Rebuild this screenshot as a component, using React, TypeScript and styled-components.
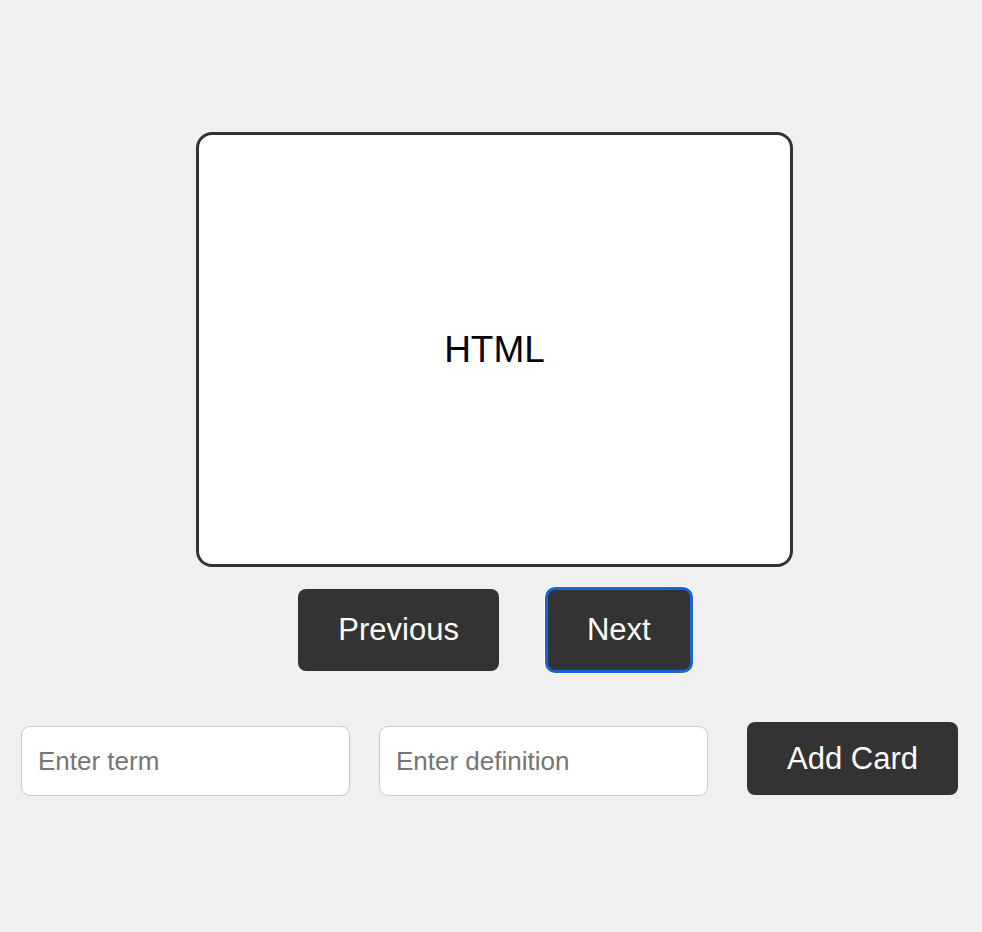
import React from "react";
import styled, { createGlobalStyle } from "styled-components";

const GlobalStyle = createGlobalStyle`
  html, body {
    margin: 0;
    padding: 0;
    background: #f0f0f0;
    font-family: "Liberation Sans", Arial, Helvetica, sans-serif;
  }
  * { box-sizing: border-box; }
`;

const Page = styled.div`
  width: 982px;
  min-height: 932px;
  display: flex;
  flex-direction: column;
`;

const Stage = styled.section`
  display: flex;
  flex-direction: column;
  align-items: center;
  padding: 132px 0 0 7px;
`;

const Card = styled.div`
  width: 597px;
  height: 435px;
  background: #ffffff;
  border: 3px solid #333333;
  border-radius: 16px;
  display: flex;
  align-items: center;
  justify-content: center;
  font-size: 37px;
  color: #000000;
`;

const NavRow = styled.div`
  display: flex;
  gap: 48px;
  margin-top: 22px;
`;

const DarkButton = styled.button<{ $h: number; $focused?: boolean }>`
  height: ${(p) => p.$h}px;
  padding: 0 40px;
  background: #333333;
  color: #ffffff;
  border: none;
  border-radius: 8px;
  font-family: "Liberation Sans", Arial, Helvetica, sans-serif;
  font-size: 31px;
  cursor: pointer;
  ${(p) =>
    p.$focused
      ? `outline: 3px solid #1766d6; outline-offset: -1px; box-shadow: 0 0 0 3px #ffffff;`
      : ""}
`;

const FormRow = styled.div`
  display: flex;
  align-items: center;
  padding-left: 21px;
  margin-top: 50px;
`;

const Field = styled.input<{ $gap: number }>`
  width: 329px;
  height: 70px;
  margin-right: ${(p) => p.$gap}px;
  margin-top: 5px;
  padding: 0 16px;
  background: #ffffff;
  border: 1.5px solid #cacaca;
  border-radius: 9px;
  font-family: "Liberation Sans", Arial, Helvetica, sans-serif;
  font-size: 26px;
  color: #222;
  &::placeholder {
    color: #757575;
  }
  &:focus { outline: none; }
`;

export default function App() {
  return (
    <Page>
      <GlobalStyle />
      <Stage>
        <Card>HTML</Card>
        <NavRow>
          <DarkButton $h={82}>Previous</DarkButton>
          <DarkButton $h={82} $focused>
            Next
          </DarkButton>
        </NavRow>
      </Stage>
      <FormRow>
        <Field $gap={29} placeholder="Enter term" />
        <Field $gap={39} placeholder="Enter definition" />
        <DarkButton $h={73}>Add Card</DarkButton>
      </FormRow>
    </Page>
  );
}
